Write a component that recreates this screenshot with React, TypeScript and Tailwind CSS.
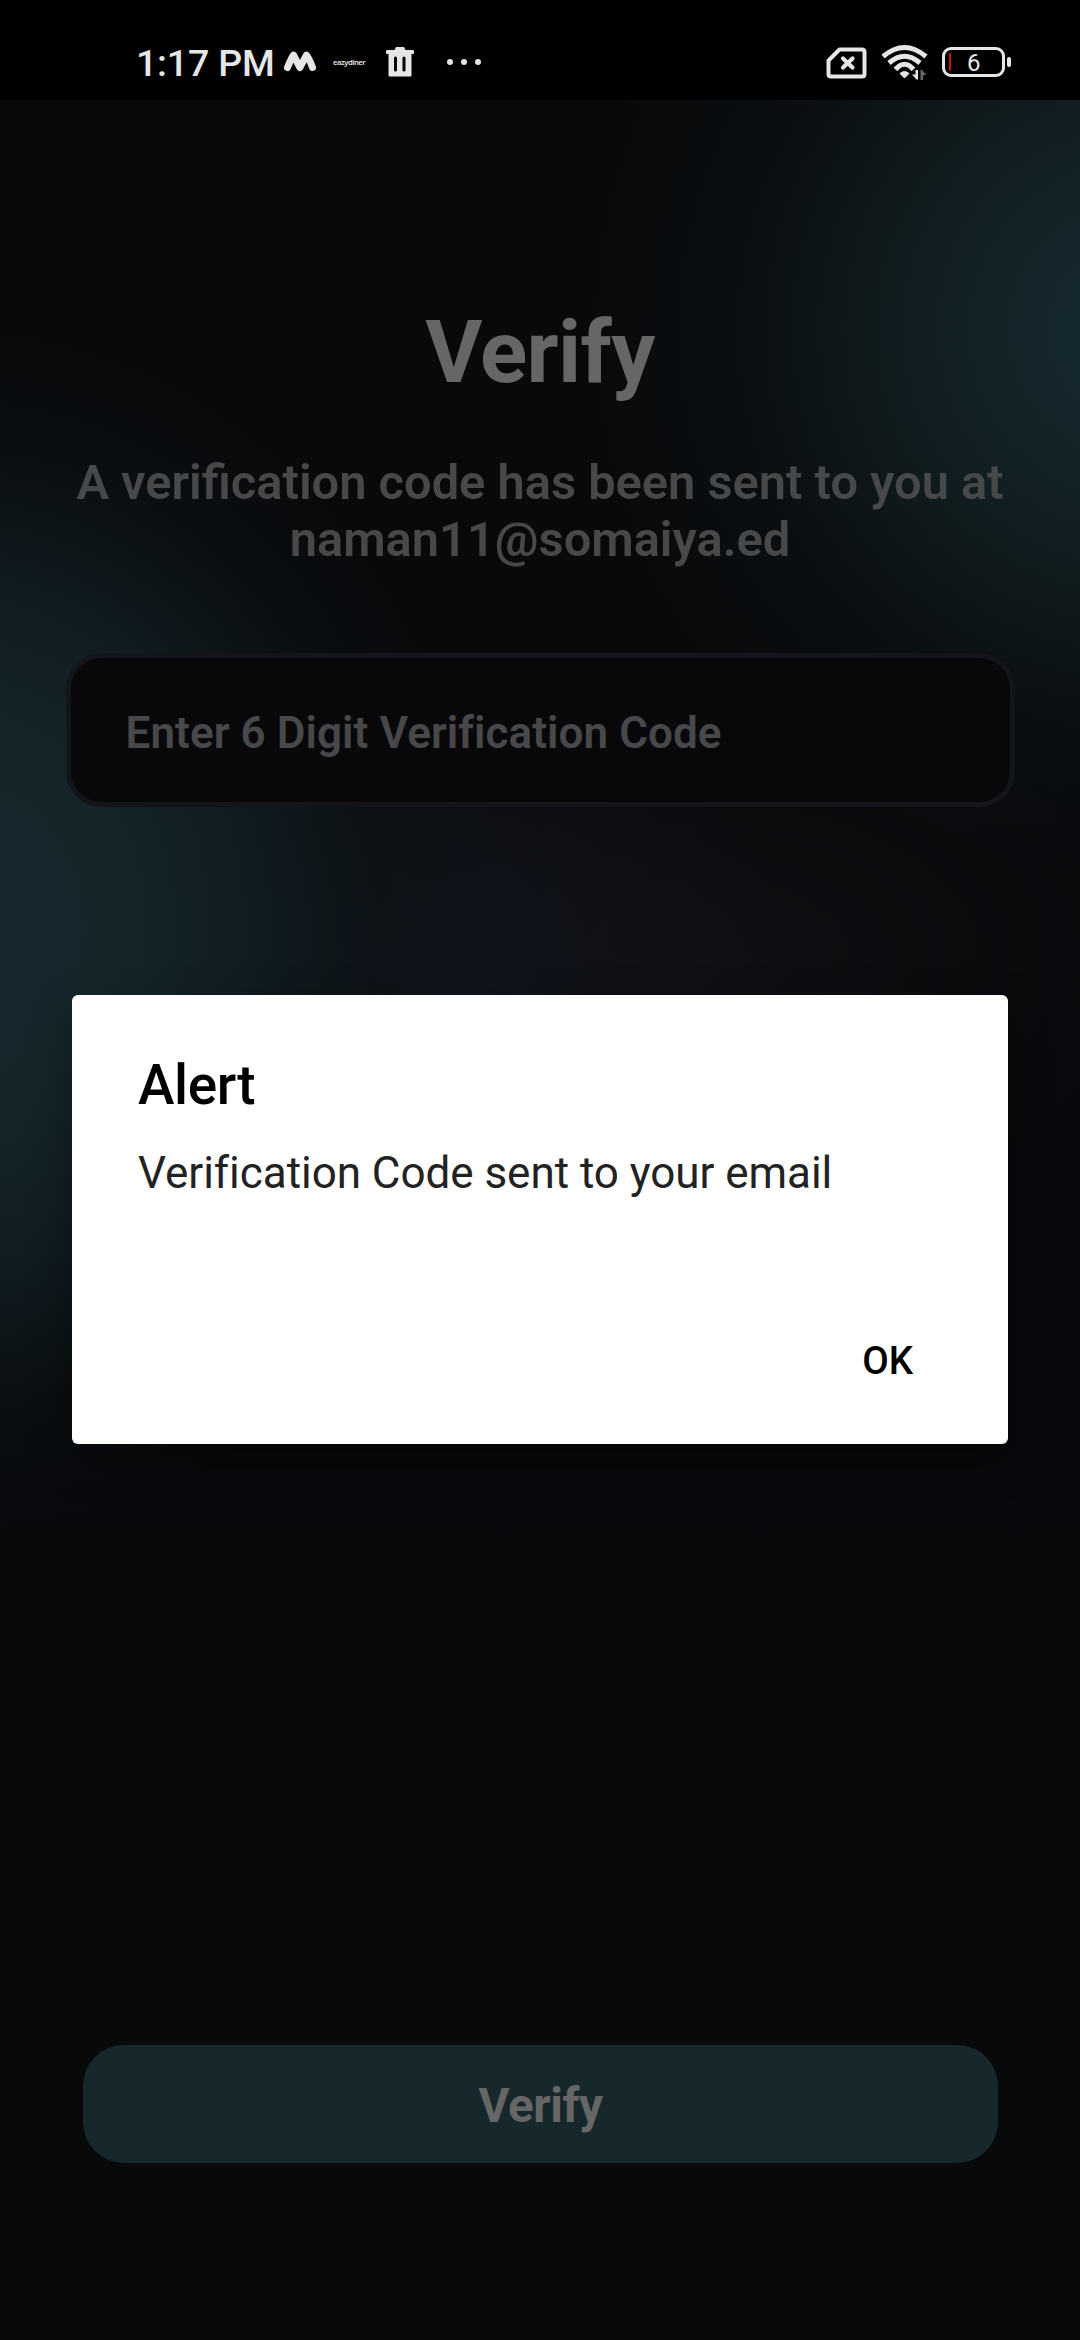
import React from "react";

function StatusBar() {
  return (
    <header className="flex h-[100px] items-center bg-black pt-[25px] text-[#e6e6e6]">
      <div className="ml-[136px] w-[139px] shrink-0 whitespace-nowrap pt-[1px] text-[37.500px] font-medium leading-[75px] tracking-[-0.2px]">
        1:17 PM
      </div>
      <svg className="ml-[8px] mb-[1px] h-[24px] w-[34px]" viewBox="0 0 34 24" fill="none" stroke="currentColor" strokeWidth="7" strokeLinecap="round" strokeLinejoin="round">
        <path d="M4.500 17.500C7 11.500 9 7 10.600 5.200L16.800 17.500L23.500 5.200C25.500 7.500 27.500 12 29.500 17.500" />
      </svg>
      <span className="ml-[16px] mb-[2px] w-[33px] whitespace-nowrap font-['Noto_Sans'] text-[7.500px] font-semibold leading-[8px] tracking-[-0.4px]">eazydiner</span>
      <svg className="mb-[1px] ml-[19px] h-[32px] w-[30px]" viewBox="0 0 30 32" fill="currentColor">
        <path fillRule="evenodd" d="M11 1h8l1.500 3H28q1 0 1 1v2q0 1-1 1h-1.500v21.500q0 1-1 1h-21q-1 0-1-1V8H2Q1 8 1 7V5q0-1 1-1h7.500zM10.500 10.500q-1.500 0-1.500 1.500v12q0 1.500 1.500 1.500T12 24V12q0-1.500-1.500-1.500zm8.500 0q-1.500 0-1.500 1.500v12q0 1.500 1.500 1.500t1.500-1.500V12q0-1.500-1.500-1.500z" />
      </svg>
      <div className="mb-[1px] ml-[32px] flex gap-[8px]">
        <i className="size-[6px] rounded-full bg-current" />
        <i className="size-[6px] rounded-full bg-current" />
        <i className="size-[6px] rounded-full bg-current" />
      </div>
      <div className="mb-[1px] ml-auto mr-[69px] flex items-center">
        <svg className="mt-[2px] h-[32px] w-[41px]" viewBox="0 0 41 32" fill="none" stroke="currentColor">
          <path d="M13.500 2.500H36Q38.500 2.500 38.500 5V27Q38.500 29.500 36 29.500H5Q2.500 29.500 2.500 27V13.500Z" strokeWidth="4" strokeLinejoin="round" />
          <path d="M17 11.500L26.500 20.500M26.500 11.500L17 20.500" strokeWidth="4.200" strokeLinecap="round" />
        </svg>
        <svg className="ml-[14px] h-[36px] w-[48px]" viewBox="0 0 48 36" fill="none" stroke="currentColor" strokeWidth="5">
          <path d="M2 12.500Q23.500 -5.500 45 12.500" />
          <path d="M8 19Q23.500 5.500 39 19" />
          <path d="M14.500 25.500Q23.500 15 32.500 25.500" />
          <path d="M19 29.500Q23.500 25.500 28 29.500L23.500 34Z" fill="currentColor" strokeWidth="1" strokeLinejoin="round" />
          <path d="M37 26V35.500H35.500L31 30.500H34.500V26Z" fill="currentColor" stroke="none" />
          <path d="M39.500 36V26H41L45.500 31H42.200V36Z" fill="#666" stroke="none" />
        </svg>
        <div className="ml-[13px] flex h-[30px] w-[63px] items-center rounded-[9px] border-[3px] border-current pl-[4px]">
          <i className="h-[18px] w-[2px] rounded-full bg-[#c80f12]" />
          <span className="ml-[16px] pt-[2px] text-[24px] leading-[26px]">6</span>
        </div>
        <i className="ml-[2px] h-[10px] w-[4px] rounded-[2px] bg-current" />
      </div>
    </header>
  );
}

function AlertDialog() {
  return (
    <div role="alertdialog" className="absolute left-[72px] top-[995px] flex h-[449px] w-[936px] flex-col rounded-[6px] bg-white px-[66px] pt-[58px] shadow-[0_16px_40px_rgba(0,0,0,0.35)]">
      <h2 className="text-[55px] font-medium leading-[65px] tracking-[-0.4px] text-black">Alert</h2>
      <p className="mt-[29px] whitespace-nowrap text-[44px] leading-[52px] tracking-[-0.04px] text-[#222]">Verification Code sent to your email</p>
      <button className="ml-auto mr-[29px] mt-[139px] text-[38.500px] font-medium leading-[46px] text-black">OK</button>
    </div>
  );
}

export default function App() {
  return (
    <div className="relative flex h-[2340px] w-[1080px] flex-col overflow-hidden bg-[#07090a] font-[Roboto,sans-serif]">
      <StatusBar />
      <main className="flex flex-1 flex-col bg-[radial-gradient(ellipse_560px_560px_at_1140px_230px,#15292e_0%,#14262b_20%,#101b1e_46%,#0c121499_72%,#0b0e1000_100%),radial-gradient(ellipse_540px_610px_at_-50px_830px,#16292e_0%,#15262b_30%,#101c20_56%,#0c121599_79%,#0b0e1000_100%),radial-gradient(ellipse_400px_300px_at_390px_870px,#11161e_0%,#11161e00_100%),radial-gradient(ellipse_480px_270px_at_700px_860px,#100f13_0%,#100f1300_100%),linear-gradient(180deg,#08090b_0%,#08090c_60%,#07090a_75%)]">
        <h1 className="mt-[187px] text-center text-[87.500px] font-bold leading-[130px] tracking-[-0.6px] text-[#666]">Verify</h1>
        <p className="mt-[37px] text-center text-[48.800px] font-semibold leading-[57px] text-[#47484a]">
          A verification code has been sent to you at
          <br />
          naman11@somaiya.ed
        </p>
        <div className="mx-[65.500px] mt-[85px] flex h-[154px] items-center rounded-[36px] border-[5.500px] border-[#14151a] bg-[#08080a] pl-[55px] text-[44px] font-semibold leading-[52px] tracking-[0.07px] text-[#47484a]">
          <span className="pt-[6px]">Enter 6 Digit Verification Code</span>
        </div>
        <button className="ml-[83px] mr-[82px] mb-[177px] mt-auto h-[118px] rounded-[41px] bg-[#17282d] pt-[5px] text-[47.500px] font-bold tracking-[-0.4px] text-[#666]">
          Verify
        </button>
      </main>
      <AlertDialog />
    </div>
  );
}
